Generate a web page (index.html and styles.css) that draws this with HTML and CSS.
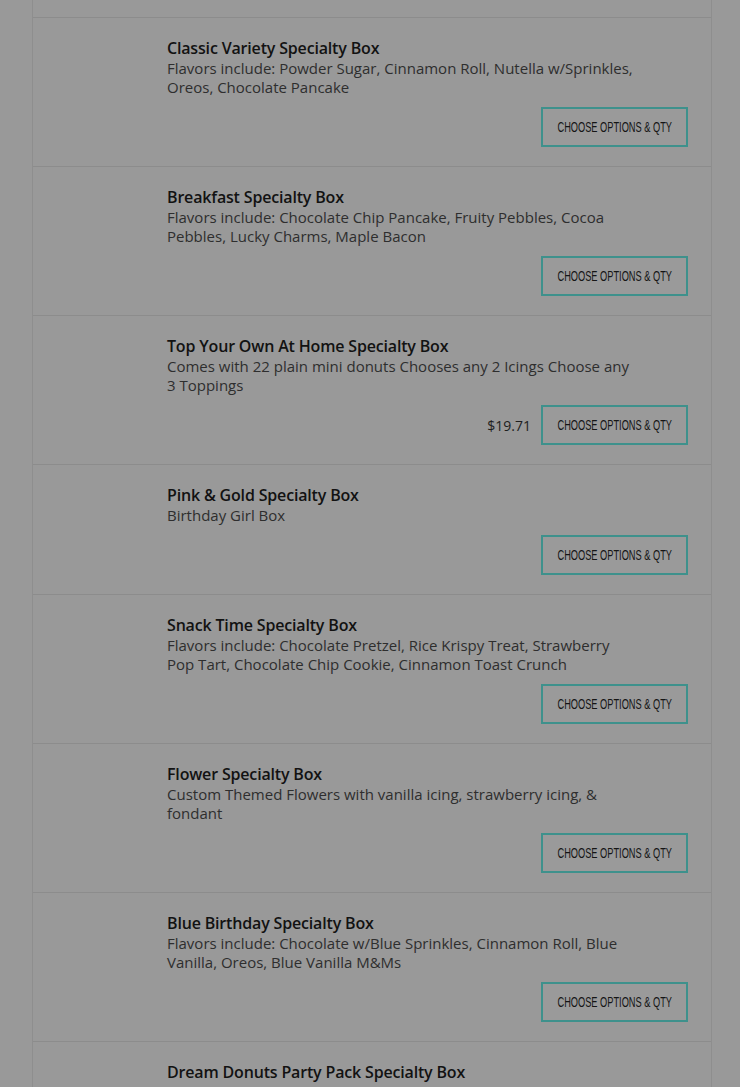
FILE: index.html
```html
<!DOCTYPE html>
<html lang="en">
<head>
<meta charset="utf-8">
<title>Specialty Boxes</title>
<link rel="stylesheet" href="styles.css">
</head>
<body>
<div class="list">
  <div class="row-edge"></div>
  <div class="row">
    <div class="info">
      <h3 class="title">Classic Variety Specialty Box</h3>
      <p class="desc">Flavors include: Powder Sugar, Cinnamon Roll, Nutella w/Sprinkles, Oreos, Chocolate Pancake</p>
      <div class="actions"><button class="btn"><span class="btn-label">Choose Options &amp; Qty</span></button></div>
    </div>
  </div>
  <div class="row">
    <div class="info">
      <h3 class="title">Breakfast Specialty Box</h3>
      <p class="desc">Flavors include: Chocolate Chip Pancake, Fruity Pebbles, Cocoa Pebbles, Lucky Charms, Maple Bacon</p>
      <div class="actions"><button class="btn"><span class="btn-label">Choose Options &amp; Qty</span></button></div>
    </div>
  </div>
  <div class="row">
    <div class="info">
      <h3 class="title">Top Your Own At Home Specialty Box</h3>
      <p class="desc">Comes with 22 plain mini donuts Chooses any 2 Icings Choose any 3 Toppings</p>
      <div class="actions"><span class="price">$19.71</span><button class="btn"><span class="btn-label">Choose Options &amp; Qty</span></button></div>
    </div>
  </div>
  <div class="row">
    <div class="info">
      <h3 class="title">Pink &amp; Gold Specialty Box</h3>
      <p class="desc">Birthday Girl Box</p>
      <div class="actions"><button class="btn"><span class="btn-label">Choose Options &amp; Qty</span></button></div>
    </div>
  </div>
  <div class="row">
    <div class="info">
      <h3 class="title">Snack Time Specialty Box</h3>
      <p class="desc">Flavors include: Chocolate Pretzel, Rice Krispy Treat, Strawberry Pop Tart, Chocolate Chip Cookie, Cinnamon Toast Crunch</p>
      <div class="actions"><button class="btn"><span class="btn-label">Choose Options &amp; Qty</span></button></div>
    </div>
  </div>
  <div class="row">
    <div class="info">
      <h3 class="title">Flower Specialty Box</h3>
      <p class="desc">Custom Themed Flowers with vanilla icing, strawberry icing, &amp; fondant</p>
      <div class="actions"><button class="btn"><span class="btn-label">Choose Options &amp; Qty</span></button></div>
    </div>
  </div>
  <div class="row">
    <div class="info">
      <h3 class="title">Blue Birthday Specialty Box</h3>
      <p class="desc">Flavors include: Chocolate w/Blue Sprinkles, Cinnamon Roll, Blue Vanilla, Oreos, Blue Vanilla M&amp;Ms</p>
      <div class="actions"><button class="btn"><span class="btn-label">Choose Options &amp; Qty</span></button></div>
    </div>
  </div>
  <div class="row">
    <div class="info">
      <h3 class="title">Dream Donuts Party Pack Specialty Box</h3>
      <p class="desc">Each pack comes with 4 dozen mini donuts in assorted flavors and toppings</p>
      <div class="actions"><button class="btn"><span class="btn-label">Choose Options &amp; Qty</span></button></div>
    </div>
  </div>
</div>
</body>
</html>
```

FILE: styles.css
```css
html, body {
  margin: 0;
  padding: 0;
  background: #999999;
  overflow: hidden;
}

body {
  font-family: "Open Sans", "Liberation Sans", sans-serif;
  height: 1087px;
}

.list {
  margin: 0 0 0 32px;
  width: 678px;
  border-left: 1px solid #8e8e8e;
  border-right: 1px solid #8e8e8e;
}

.row-edge {
  height: 17px;
  border-bottom: 1px solid #8c8c8c;
}

.row {
  border-bottom: 1px solid #8c8c8c;
  padding: 19px 23px 19px 134px;
}

.info {
  display: flex;
  flex-direction: column;
}

.title {
  margin: 0;
  font-size: 16px;
  line-height: 22px;
  font-weight: 600;
  letter-spacing: -0.17px;
  color: #121212;
}

.desc {
  margin: 0;
  max-width: 466px;
  font-size: 15px;
  line-height: 19px;
  color: #2e2e2e;
}

.actions {
  margin-top: 10px;
  display: flex;
  justify-content: flex-end;
  align-items: center;
  gap: 10px;
}

.price {
  font-size: 14px;
  color: #1e1e1e;
}

.btn {
  width: 147px;
  height: 40px;
  border: 2px solid #3e918c;
  background: #9a9a9a;
  padding: 0;
  margin: 0;
  display: flex;
  align-items: center;
  justify-content: center;
  font-family: "Liberation Sans", Arial, sans-serif;
  color: #151515;
}

.btn-label {
  display: inline-block;
  font-size: 14px;
  text-transform: uppercase;
  white-space: nowrap;
  transform: scaleX(0.66);
}
```
